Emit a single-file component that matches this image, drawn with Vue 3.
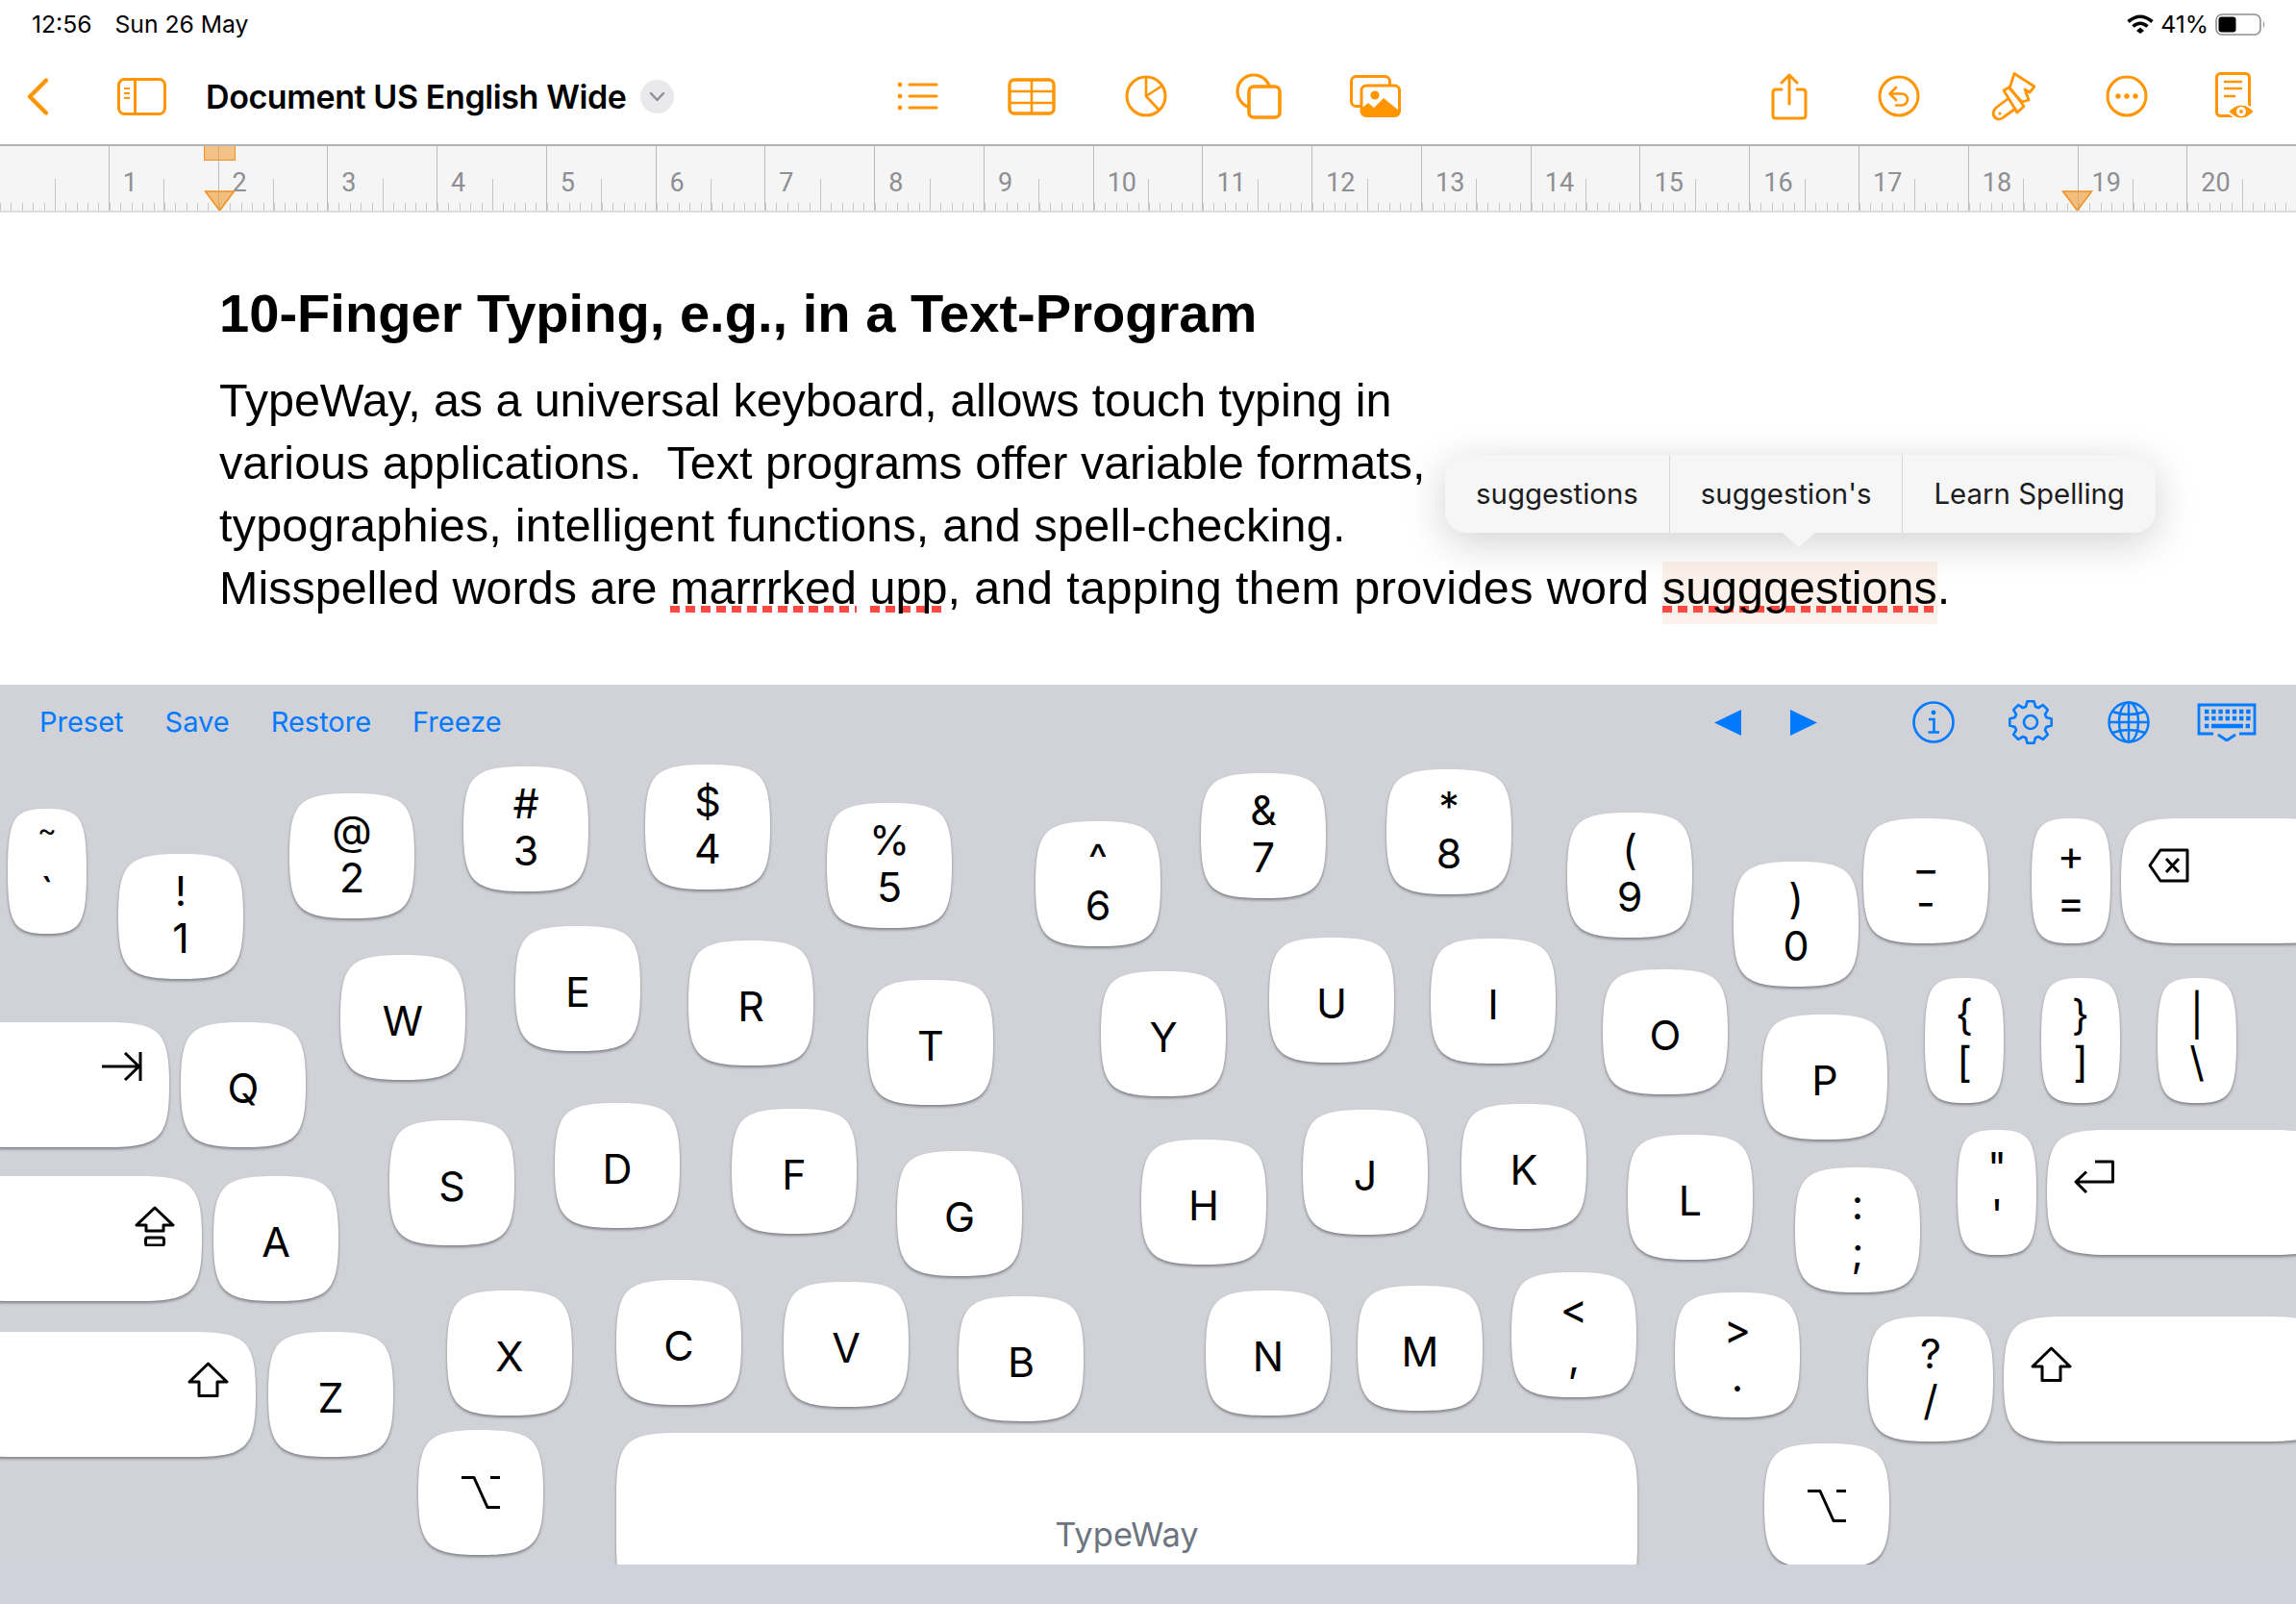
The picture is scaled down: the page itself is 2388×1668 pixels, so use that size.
<script setup>
// Key positions are the content here: the TypeWay layout is a free canvas of scattered keys
const STAGE_TOP = 790;
const KEY_W = 130;
const KEY_H = 130;
const NARROW = 82;

const keys = [
  // number row
  { x: 8, y: 841, w: NARROW, top: '~', bottom: '`', tilde: true },
  { x: 123, y: 888, top: '!', bottom: '1' },
  { x: 301, y: 825, top: '@', bottom: '2' },
  { x: 482, y: 797, top: '#', bottom: '3' },
  { x: 671, y: 795, top: '$', bottom: '4' },
  { x: 860, y: 835, top: '%', bottom: '5' },
  { x: 1077, y: 854, top: '^', bottom: '6' },
  { x: 1249, y: 804, top: '&', bottom: '7' },
  { x: 1442, y: 800, top: '*', bottom: '8' },
  { x: 1630, y: 845, top: '(', bottom: '9' },
  { x: 1803, y: 896, top: ')', bottom: '0' },
  { x: 1938, y: 851, top: '_', bottom: '-' },
  { x: 2113, y: 851, w: NARROW, top: '+', bottom: '=' },
  { x: 2206, y: 851, w: 230, icon: 'backspace', side: 'start' },
  // top letters
  { x: -60, y: 1063, w: 236, icon: 'tab', side: 'end' },
  { x: 188, y: 1063, label: 'Q' },
  { x: 354, y: 993, label: 'W' },
  { x: 536, y: 963, label: 'E' },
  { x: 716, y: 978, label: 'R' },
  { x: 903, y: 1019, label: 'T' },
  { x: 1145, y: 1010, label: 'Y' },
  { x: 1320, y: 975, label: 'U' },
  { x: 1488, y: 976, label: 'I' },
  { x: 1667, y: 1008, label: 'O' },
  { x: 1833, y: 1055, label: 'P' },
  { x: 2002, y: 1017, w: NARROW, top: '{', bottom: '[' },
  { x: 2123, y: 1017, w: NARROW, top: '}', bottom: ']' },
  { x: 2244, y: 1017, w: NARROW, top: '|', bottom: '\\' },
  // home row
  { x: -60, y: 1223, w: 270, icon: 'caps', side: 'end' },
  { x: 222, y: 1223, label: 'A' },
  { x: 405, y: 1165, label: 'S' },
  { x: 577, y: 1147, label: 'D' },
  { x: 761, y: 1153, label: 'F' },
  { x: 933, y: 1197, label: 'G' },
  { x: 1187, y: 1185, label: 'H' },
  { x: 1355, y: 1154, label: 'J' },
  { x: 1520, y: 1148, label: 'K' },
  { x: 1693, y: 1180, label: 'L' },
  { x: 1867, y: 1214, top: ':', bottom: ';' },
  { x: 2036, y: 1175, w: NARROW, top: '"', bottom: "'" },
  { x: 2129, y: 1175, w: 300, icon: 'return', side: 'start' },
  // bottom letters
  { x: -60, y: 1385, w: 326, icon: 'shift', side: 'end' },
  { x: 279, y: 1385, label: 'Z' },
  { x: 465, y: 1342, label: 'X' },
  { x: 641, y: 1331, label: 'C' },
  { x: 815, y: 1333, label: 'V' },
  { x: 997, y: 1348, label: 'B' },
  { x: 1254, y: 1342, label: 'N' },
  { x: 1412, y: 1337, label: 'M' },
  { x: 1572, y: 1323, top: '<', bottom: ',' },
  { x: 1742, y: 1344, top: '>', bottom: '.' },
  { x: 1943, y: 1369, top: '?', bottom: '/' },
  { x: 2084, y: 1369, w: 340, icon: 'shift', side: 'start' },
  // thumbs
  { x: 435, y: 1487, icon: 'option' },
  { x: 641, y: 1490, w: 1062, h: 180, space: 'TypeWay' },
  { x: 1835, y: 1501, icon: 'option' },
];

const rulerCells = Array.from({ length: 21 }, (_, i) => i);

// Superellipse corners, straight edges only where a key is wider than it is tall
const keyPath = (w, h) => {
  const hx = Math.min(w / 2, 65);
  const hy = 65;
  const p = 0.85;
  const dx = hx * p;
  const dy = hy * p;
  return [
    `M${hx} 0`,
    `L${w - hx} 0`,
    `C${w - hx + dx} 0 ${w} ${hy - dy} ${w} ${hy}`,
    `L${w} ${h - hy}`,
    `C${w} ${h - hy + dy} ${w - hx + dx} ${h} ${w - hx} ${h}`,
    `L${hx} ${h}`,
    `C${hx - dx} ${h} 0 ${h - hy + dy} 0 ${h - hy}`,
    `L0 ${hy}`,
    `C0 ${hy - dy} ${hx - dx} 0 ${hx} 0Z`,
  ].join(' ');
};

const keyStyle = (k) => ({
  left: `${k.x}px`,
  top: `${k.y - STAGE_TOP}px`,
  width: `${k.w || KEY_W}px`,
  height: `${k.h || KEY_H}px`,
});

// Gear outline with eight teeth
const gearPath = (() => {
  const teeth = 8;
  const pts = [];
  for (let t = 0; t < teeth; t++) {
    const base = (t / teeth) * Math.PI * 2;
    const step = (Math.PI * 2) / teeth;
    [
      [17, -0.5],
      [22, -0.27],
      [22, 0.27],
      [17, 0.5],
    ].forEach(([r, f]) => {
      const an = base + f * step * 0.75;
      pts.push(`${(23 + r * Math.sin(an)).toFixed(1)} ${(23 - r * Math.cos(an)).toFixed(1)}`);
    });
  }
  return `M${pts.join(' L')}Z`;
})();
</script>

<template>
  <div class="page">
    <!-- Status bar -->
    <div class="status-bar">
      <div class="status-left">
        <span>12:56</span>
        <span>Sun 26 May</span>
      </div>
      <div class="status-right">
        <svg width="28" height="20" viewBox="0 0 28 20" fill="none" stroke="#000" stroke-width="3.6">
          <path d="M1.5 7.5Q14 -3 26.5 7.5" />
          <path d="M6.5 12.5Q14 6 21.5 12.5" />
          <path d="M10 17L14 13.5L18 17L14 20Z" fill="#000" stroke="none" />
        </svg>
        <span class="battery-text">41%</span>
        <svg width="53" height="23" viewBox="0 0 53 23" fill="none">
          <rect x="1" y="1" width="46" height="21" rx="6" stroke="#8e8e93" stroke-width="1.6" />
          <rect x="3.5" y="3.5" width="18" height="16" rx="3" fill="#000" />
          <path d="M50 8Q52.5 11.5 50 15Z" fill="#8e8e93" />
        </svg>
      </div>
    </div>

    <!-- Toolbar -->
    <div class="toolbar">
      <div class="tool-left">
        <svg width="22" height="39" viewBox="0 0 22 39" fill="none" stroke="#ff9500" stroke-width="4.4" stroke-linecap="round" stroke-linejoin="round">
          <polyline points="20,2.5 3,19.5 20,36.5" />
        </svg>
        <svg class="sidebar-icon" width="51" height="39" viewBox="0 0 51 39" fill="none" stroke="#ff9500" stroke-width="3">
          <rect x="1.5" y="1.5" width="48" height="36" rx="6" />
          <path d="M18.5 1.5V37.5" />
          <path d="M7 11H13M7 16H13M7 21H13" stroke-width="2" />
        </svg>
        <span class="doc-title">Document US English Wide</span>
        <span class="title-chevron">
          <svg width="17" height="11" viewBox="0 0 17 11" fill="none" stroke="#8e8e93" stroke-width="2.4" stroke-linecap="round" stroke-linejoin="round">
            <polyline points="2,2 8.5,9 15,2" />
          </svg>
        </span>
      </div>

      <div class="tool-group center">
        <span class="tool">
          <svg width="43" height="30" viewBox="0 0 43 30" fill="#ff9500" stroke="#ff9500" stroke-linecap="round">
            <circle cx="3" cy="3" r="2.4" stroke="none" />
            <circle cx="3" cy="15" r="2.4" stroke="none" />
            <circle cx="3" cy="27" r="2.4" stroke="none" />
            <path d="M13 3H41M13 15H41M13 27H41" stroke-width="3.2" />
          </svg>
        </span>
        <span class="tool">
          <svg width="50" height="39" viewBox="0 0 50 39" fill="none" stroke="#ff9500">
            <rect x="2" y="2" width="46" height="35" rx="5" stroke-width="3.4" />
            <path d="M2 14H48M2 26H48M25 2V37" stroke-width="2.6" />
          </svg>
        </span>
        <span class="tool">
          <svg width="44" height="44" viewBox="0 0 44 44" fill="none" stroke="#ff9500" stroke-width="3">
            <circle cx="22" cy="22" r="20" />
            <path d="M22 2V22L39 11M22 22L36 37" stroke-linejoin="round" stroke-width="2.6" />
          </svg>
        </span>
        <span class="tool">
          <svg class="shapes-icon" width="48" height="48" viewBox="0 0 48 48" fill="none" stroke="#ff9500" stroke-width="3.2">
            <circle cx="19" cy="19" r="17" />
            <rect x="14" y="14" width="32" height="32" rx="5" fill="#fff" stroke-width="3.6" />
          </svg>
        </span>
        <span class="tool">
          <svg width="53" height="44" viewBox="0 0 53 44" fill="none" stroke="#ff9500" stroke-width="3">
            <rect x="1.5" y="1.5" width="40" height="31" rx="5" />
            <rect x="12" y="11" width="39.5" height="31.5" rx="5" fill="#fff" />
            <circle cx="26" cy="21" r="4.6" fill="#ff9500" stroke="none" />
            <path d="M12 35L19 29L25 34L35 24L51 37V39Q51 43 47 43H16Q12 43 12 39Z" fill="#ff9500" stroke="none" />
          </svg>
        </span>
      </div>

      <div class="tool-group trailing">
        <svg width="38" height="49" viewBox="0 0 38 49" fill="none" stroke="#ff9500" stroke-width="3" stroke-linecap="round" stroke-linejoin="round">
          <path d="M11 17H5Q2 17 2 20V44Q2 47 5 47H33Q36 47 36 44V20Q36 17 33 17H27" />
          <path d="M19 3V32M11 10L19 2L27 10" />
        </svg>
        <svg width="44" height="44" viewBox="0 0 44 44" fill="none" stroke="#ff9500" stroke-width="3" stroke-linecap="round" stroke-linejoin="round">
          <circle cx="22" cy="22" r="20" />
          <path d="M19 13L12.5 19.5L19 26M12.5 19.5H25A6 6 0 0 1 25 31.5H19" stroke-width="2.6" />
        </svg>
        <svg width="47" height="51" viewBox="0 0 47 51" fill="none" stroke="#ff9500" stroke-width="2.8" stroke-linejoin="round" stroke-linecap="round">
          <path d="M25 1.5L46 15L41 21L36 18L40 29L33 31L20 17Z" />
          <path d="M14 19L20 15.5L35 35.5L28 42Z" />
          <path d="M18 28L6 37Q2 41 3.5 45Q6 50 11 48.5Q13 48 15 46L26 38" />
          <circle cx="10" cy="43" r="1.6" fill="#ff9500" stroke="none" />
        </svg>
        <svg width="44" height="44" viewBox="0 0 44 44" fill="none" stroke="#ff9500" stroke-width="3">
          <circle cx="22" cy="22" r="20" />
          <g fill="#ff9500" stroke="none">
            <circle cx="13" cy="22" r="2.7" />
            <circle cx="22" cy="22" r="2.7" />
            <circle cx="31" cy="22" r="2.7" />
          </g>
        </svg>
        <svg class="doc-eye" width="41" height="51" viewBox="0 0 41 51" fill="none" stroke="#ff9500" stroke-width="3">
          <rect x="1.5" y="1.5" width="34" height="44" rx="4" />
          <path d="M9 10H28M9 17H28M9 25H21" stroke-width="2.6" />
          <path d="M13 41Q27 26 41 41Q27 56 13 41Z" fill="#ff9500" stroke="#fff" stroke-width="2" />
          <circle cx="27" cy="41" r="5" fill="#fff" stroke="none" />
          <circle cx="27" cy="41" r="2" fill="#ff9500" stroke="none" />
        </svg>
      </div>
    </div>

    <!-- Ruler -->
    <div class="ruler">
      <div v-for="n in rulerCells" :key="n" class="ruler-cell">
        <span v-if="n > 0" class="ruler-num">{{ n }}</span>
      </div>
      <span class="margin-box"></span>
      <svg class="margin-mark left" width="33" height="22" viewBox="0 0 33 22">
        <path d="M1.5 1H31.5L16.5 21Z" />
      </svg>
      <svg class="margin-mark right" width="33" height="22" viewBox="0 0 33 22">
        <path d="M1.5 1H31.5L16.5 21Z" />
      </svg>
    </div>

    <!-- Document -->
    <div class="document">
      <h1 class="doc-heading">10-Finger Typing, e.g., in a Text-Program</h1>
      <p class="doc-body">
        <span class="line-a">TypeWay, as a universal keyboard, allows touch typing in</span><br />
        various applications.&nbsp; Text programs offer variable formats,<br />
        <span class="line-c">typographies, intelligent functions, and spell-checking.</span><br />
        Misspelled words are <span class="misspelled">marrrked</span> <span class="misspelled">upp</span><span class="line-d">, and tapping them provides word</span> <span class="misspelled active">sugggestions</span>.
      </p>

      <div class="spell-menu">
        <span class="spell-item">suggestions</span>
        <span class="spell-item">suggestion's</span>
        <span class="spell-item">Learn Spelling</span>
      </div>
    </div>

    <!-- Keyboard -->
    <div class="keyboard">
      <div class="accessory">
        <div class="accessory-actions">
          <span>Preset</span>
          <span>Save</span>
          <span>Restore</span>
          <span>Freeze</span>
        </div>
        <div class="accessory-icons">
          <svg width="28" height="27" viewBox="0 0 28 27" fill="#007aff"><path d="M28 0V27L0 13.5Z" /></svg>
          <svg class="next-arrow" width="28" height="27" viewBox="0 0 28 27" fill="#007aff"><path d="M0 0V27L28 13.5Z" /></svg>
          <svg class="info-icon" width="44" height="44" viewBox="0 0 44 44" fill="none" stroke="#007aff" stroke-width="2.6">
            <circle cx="22" cy="22" r="20.5" />
            <circle cx="22" cy="12" r="2.4" fill="#007aff" stroke="none" />
            <path d="M17 19H22.5V32M16.5 32.5H28" />
          </svg>
          <svg class="gear-icon" width="46" height="46" viewBox="0 0 46 46" fill="none" stroke="#007aff" stroke-width="2.6" stroke-linejoin="round">
            <path :d="gearPath" />
            <circle cx="23" cy="23" r="7" />
          </svg>
          <svg class="globe-icon" width="44" height="44" viewBox="0 0 44 44" fill="none" stroke="#007aff" stroke-width="2.4">
            <circle cx="22" cy="22" r="20.5" />
            <ellipse cx="22" cy="22" rx="10" ry="20.5" />
            <path d="M22 1.5V42.5M1.5 22H42.5M5 11Q22 17 39 11M5 33Q22 27 39 33" />
          </svg>
          <svg class="kb-icon" width="62" height="40" viewBox="0 0 62 40" fill="none" stroke="#007aff" stroke-width="2.8">
            <path d="M17 32H2V2H60V32H44" />
            <path d="M22 33L31 39L40 33" />
            <path d="M8 9H56M8 16H56" stroke-width="4.4" stroke-dasharray="4.4 2.8" />
            <path d="M8 24H12.4M15 24H48M50.6 24H55" stroke-width="4.4" />
          </svg>
        </div>
      </div>

      <div class="key-stage">
        <div v-for="(k, i) in keys" :key="i" class="key" :class="k.side" :style="keyStyle(k)">
          <svg class="key-shape" :width="k.w || KEY_W" :height="k.h || KEY_H">
            <path :d="keyPath(k.w || KEY_W, k.h || KEY_H)" />
          </svg>

          <span v-if="k.label" class="key-letter">{{ k.label }}</span>

          <span v-else-if="k.top" class="key-pair">
            <span :class="{ 'small-tilde': k.tilde }">{{ k.top }}</span>
            <span>{{ k.bottom }}</span>
          </span>

          <span v-else-if="k.space" class="key-space">{{ k.space }}</span>

          <svg v-else-if="k.icon === 'tab'" class="key-icon" width="42" height="30" viewBox="0 0 42 30">
            <path d="M0 15H38M24 1L38.5 15L24 29M40 0V30" />
          </svg>
          <svg v-else-if="k.icon === 'shift'" class="key-icon" width="43" height="38" viewBox="0 0 43 38">
            <path d="M21.5 2L41 21H31V35.5H12V21H2Z" />
          </svg>
          <svg v-else-if="k.icon === 'caps'" class="key-icon" width="42" height="42" viewBox="0 0 42 42">
            <path d="M21 2L40 20H30V26H12V20H2Z" />
            <rect x="11.5" y="33" width="19" height="8" rx="2" />
          </svg>
          <svg v-else-if="k.icon === 'backspace'" class="key-icon" width="43" height="36" viewBox="0 0 43 36">
            <path d="M13 2H41V34H13L2 18Z" />
            <path d="M19 11L32 25M32 11L19 25" />
          </svg>
          <svg v-else-if="k.icon === 'return'" class="key-icon" width="42" height="36" viewBox="0 0 42 36">
            <path d="M22 2H40.5V23H2M13 12.5L2 23L13 34" />
          </svg>
          <svg v-else-if="k.icon === 'option'" class="key-icon" width="40" height="34" viewBox="0 0 40 34">
            <path d="M0 1.5H13L27 32.5H40M30 1.5H40" />
          </svg>
        </div>
      </div>
      <div class="keyboard-foot"></div>
    </div>
  </div>
</template>

<style>
html,
body {
  margin: 0;
  background: #fff;
}
</style>

<style scoped>
.page {
  width: 2388px;
  height: 1668px;
  overflow: hidden;
  display: flex;
  flex-direction: column;
  background: #fff;
  color: #000;
  font-family: Inter, "Liberation Sans", sans-serif;
}

/* Status bar */
.status-bar {
  height: 50px;
  flex: none;
  display: flex;
  justify-content: space-between;
  align-items: center;
  padding: 0 31px 0 33px;
  font-size: 24.7px;
}

.status-left {
  display: flex;
  gap: 24px;
}

.status-right {
  display: flex;
  align-items: center;
  gap: 7px;
}

/* Toolbar */
.toolbar {
  height: 100px;
  flex: none;
  display: grid;
  grid-template-columns: 895px 907px 1fr;
  align-items: center;
}

.tool-left {
  display: flex;
  align-items: center;
  padding-left: 28px;
}

.sidebar-icon {
  margin-left: 72px;
}

.doc-title {
  margin-left: 41px;
  font-size: 34px;
  font-weight: 600;
  letter-spacing: -0.4px;
  white-space: nowrap;
}

.title-chevron {
  margin-left: 15px;
  width: 35px;
  height: 35px;
  border-radius: 50%;
  background: #e9e9eb;
  display: flex;
  align-items: center;
  justify-content: center;
}

.tool-group {
  display: flex;
  align-items: center;
}

.tool {
  display: flex;
  justify-content: center;
}

.center .tool {
  width: 118.9px;
}

.shapes-icon {
  margin-left: -5px;
}

.trailing {
  padding-left: 40px;
  gap: 73px;
}

.doc-eye {
  margin-left: -3px;
}

/* Ruler */
.ruler {
  position: relative;
  height: 71px;
  flex: none;
  display: flex;
  box-sizing: border-box;
  border-top: 2px solid #b4b4b4;
  border-bottom: 2px solid #dcdcdc;
  background: #f5f5f5;
  overflow: hidden;
}

.ruler-cell {
  flex: none;
  width: 113.78px;
  height: 100%;
  box-sizing: border-box;
  position: relative;
  border-right: 1px solid #bcbcbc;
  /* Minor ticks plus the taller half-way tick */
  background:
    linear-gradient(#c4c4c4, #c4c4c4) 56.5px 100% / 1px 33px no-repeat,
    repeating-linear-gradient(90deg, #c8c8c8 0 1px, transparent 1px 11.378px) 0 100% / 100% 8px no-repeat;
}

.ruler-num {
  position: absolute;
  left: 14px;
  top: 22px;
  font-family: Roboto, sans-serif;
  font-size: 27px;
  line-height: 32px;
  color: #8e8e93;
}

.margin-box {
  position: absolute;
  left: 212px;
  top: 0;
  width: 33px;
  height: 15px;
  box-sizing: border-box;
  background: rgba(240, 160, 60, 0.6);
  border: 1.5px solid #f09020;
  border-top: none;
}

.margin-mark {
  position: absolute;
  top: 46px;
  fill: rgba(240, 160, 60, 0.65);
  stroke: #f09020;
  stroke-width: 1.5;
}

.margin-mark.left {
  left: 212px;
}

.margin-mark.right {
  left: 2144px;
}

/* Document */
.document {
  position: relative;
  flex: none;
  height: 491px;
  box-sizing: border-box;
  padding: 72px 0 0 228px;
  font-family: "Liberation Sans", Arial, sans-serif;
  white-space: nowrap;
}

.doc-heading {
  margin: 0;
  font-size: 56.1px;
  line-height: 66px;
  font-weight: 700;
}

.doc-body {
  margin: 24.5px 0 0;
  font-size: 48.5px;
  line-height: 65px;
}

.line-a {
  letter-spacing: -0.08px;
}

.line-c {
  letter-spacing: 0.22px;
}

.line-d {
  letter-spacing: 0.4px;
}

/* The box is 5px taller than the line so highlight and dots sit lower than the glyphs */
.misspelled {
  display: inline-block;
  padding-bottom: 5px;
  margin-bottom: -5px;
  background: repeating-linear-gradient(90deg, #ff4a42 0 10px, transparent 10px 16px) 0 51px / 100% 7px no-repeat;
}

.misspelled.active {
  background:
    repeating-linear-gradient(90deg, #ff4a42 0 10px, transparent 10px 16px) 0 51px / 100% 7px no-repeat,
    linear-gradient(#fbf0ea, #fbf0ea) 0 5px / 100% 65px no-repeat;
}

.spell-menu {
  position: absolute;
  left: 1503px;
  top: 252px;
  height: 81px;
  display: flex;
  align-items: center;
  border-radius: 22px;
  background: #f6f6f6;
  box-shadow: 0 10px 44px rgba(0, 0, 0, 0.18);
  font-family: Inter, sans-serif;
  font-size: 29.4px;
  color: #1c1c1e;
}

/* Little arrow under the menu */
.spell-menu::after {
  content: "";
  position: absolute;
  left: 351px;
  top: 81px;
  width: 0;
  height: 0;
  border-left: 17px solid transparent;
  border-right: 17px solid transparent;
  border-top: 15px solid #f6f6f6;
}

.spell-item {
  padding: 0 32px;
  line-height: 81px;
}

.spell-item + .spell-item {
  border-left: 1.5px solid #d8d8d8;
}

/* Keyboard */
.keyboard {
  flex: none;
  height: 956px;
  display: flex;
  flex-direction: column;
  background: #d1d2d8;
  color: #007aff;
}

.accessory {
  height: 78px;
  flex: none;
  display: flex;
  justify-content: space-between;
  align-items: center;
  padding: 0 41px;
}

.accessory-actions {
  display: flex;
  gap: 43px;
  margin-top: -2px;
  font-size: 29px;
}

.accessory-icons {
  display: flex;
  align-items: center;
}

.next-arrow {
  margin-left: 51px;
}

.info-icon {
  margin-left: 99px;
}

.gear-icon {
  margin-left: 56px;
}

.globe-icon {
  margin-left: 57px;
}

.kb-icon {
  margin-left: 49px;
}

.key-stage {
  position: relative;
  flex: none;
  height: 837px;
  overflow: hidden;
  color: #000;
}

.keyboard-foot {
  flex: 1;
  background: #cfd2da;
}

.key {
  position: absolute;
  display: flex;
  align-items: center;
  justify-content: center;
  font-size: 43px;
}

.key.start,
.key.end {
  align-items: flex-start;
  padding: 31px 28px;
  box-sizing: border-box;
}

.key.start {
  justify-content: flex-start;
}

.key.end {
  justify-content: flex-end;
}

.key-shape {
  position: absolute;
  left: 0;
  top: 0;
  overflow: visible;
  fill: #fff;
  filter: drop-shadow(0 2px 1.5px rgba(70, 72, 80, 0.6));
}

.key-letter,
.key-pair,
.key-space,
.key-icon {
  position: relative;
}

.key-letter {
  margin-top: 5px;
}

.key-pair {
  display: flex;
  flex-direction: column;
  align-items: center;
  margin-bottom: 5px;
  line-height: 48.5px;
}

.small-tilde {
  font-size: 30px;
  transform: translateY(-16px);
}

.key-space {
  align-self: flex-end;
  margin-bottom: 54px;
  font-size: 34.5px;
  color: #6d7580;
}

.key-icon {
  display: block;
  fill: none;
  stroke: #000;
  stroke-width: 3;
  stroke-linejoin: round;
}
</style>
